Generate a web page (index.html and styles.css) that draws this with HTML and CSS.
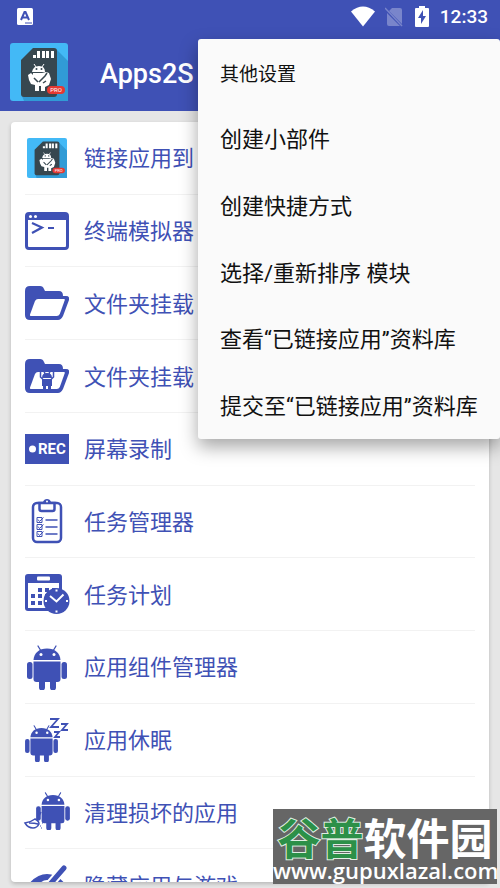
FILE: index.html
```html
<!DOCTYPE html>
<html lang="zh-CN">
<head>
<meta charset="utf-8">
<meta name="viewport" content="width=device-width, initial-scale=1">
<title>Apps2SD</title>
<link rel="stylesheet" href="styles.css">
</head>
<body>
<svg class="sprite" aria-hidden="true">
  <symbol id="sd" viewBox="0 0 58 58">
    <rect width="58" height="58" rx="3" fill="#43b9f6"/>
    <path d="M46 6l12 12v40H14l-2-5z" fill="#319bd6"/>
    <path d="M23 5h21q3 0 3 3v43q0 3-3 3H14q-3 0-3-3V17z" fill="#37474f"/>
    <path d="M23 12h3v3h-3zM27 8h3v7h-3zM32 8h3v7h-3zM36 8h3v7h-3zM41 8h3v7h-3z" fill="#fff"/>
    <path d="M24 21l2 3M34 21l-2 3" stroke="#fff" stroke-width="1"/>
    <path d="M22 29q1-6 7-6t6 6z" fill="#fff"/>
    <path d="M23 30h9l4-1 3 1 2 6-2 6-4 2v4h-4v-5h-2v5h-4v-6l-4-1-2-4-1-5 3-2 2 2z" fill="#fff"/>
    <path d="M29 39l6-6 2-3M24 35l4 4M33 40l3-2" fill="none" stroke="#37474f" stroke-width="1.500"/>
    <circle cx="26.500" cy="26" r="1" fill="#37474f"/><circle cx="31.500" cy="26" r="1" fill="#37474f"/>
    <rect x="37" y="43" width="18" height="8" rx="4" fill="#e53932"/>
    <text class="pro" x="46" y="49">PRO</text>
  </symbol>
  <symbol id="android" viewBox="0 0 40 45">
    <path d="M11 1l3 5M29 1l-3 5" stroke="currentColor" stroke-width="1.300" stroke-linecap="round"/>
    <path d="M6.500 15C7 8 12 3.500 20 3.500S33 8 33.500 15z" fill="currentColor"/>
    <circle cx="14" cy="9.500" r="1.500" fill="#fff"/><circle cx="27" cy="9.500" r="1.500" fill="#fff"/>
    <path d="M6.500 16.500h27V34q0 3-3 3h-21q-3 0-3-3z" fill="currentColor"/>
    <rect x="0" y="17" width="5.500" height="17" rx="2.500" fill="currentColor"/>
    <rect x="34.500" y="17" width="5.500" height="17" rx="2.500" fill="currentColor"/>
    <path d="M12 36h6v6.500a2.500 2.500 0 0 1-6 0zM23 36h6v6.500a2.500 2.500 0 0 1-6 0z" fill="currentColor"/>
  </symbol>
  <symbol id="folder" viewBox="0 0 44 44">
    <path d="M5 5h10q3 0 4 3l1 2h14q4 0 4 5h3q4 0 3 4l-6 16q-2 4-5 4H5q-5 0-5-5V10q0-5 5-5z" fill="currentColor"/>
    <path d="M13 18h26q1 0 .8 1l-5 14q-1 2-3 2H6q-1.500 0-1-1.500l5-13.500q1-2 3-2z" fill="#fff"/>
  </symbol>
</svg>

<header class="appbar">
  <div class="status">
    <svg class="status-app" viewBox="0 0 16 17" aria-hidden="true"><rect width="16" height="17" rx="1.500" fill="#fff"/><path d="M4 12L7.500 4h1L12 12M5.500 9.500h5" fill="none" stroke="#3f51b5" stroke-width="2"/><path d="M8 15h7" stroke="#3f51b5" stroke-width="1"/></svg>
    <svg class="wifi" viewBox="0 0 26 21" aria-hidden="true"><path d="M13 20.500L1 5.500Q13-4.500 25 5.500z" fill="#fff"/></svg>
    <svg class="sim" viewBox="0 0 18 20" aria-hidden="true"><path d="M7 1h8q2 0 2 2v14L4 4zM2 6l13 13H4q-2 0-2-2z" fill="#7985cb"/><path d="M0 1l17 18" stroke="#7985cb" stroke-width="1.500"/></svg>
    <svg class="battery" viewBox="0 0 14 21" aria-hidden="true"><path d="M4 0h6v2h3q1 0 1 1v17q0 1-1 1H1q-1 0-1-1V3q0-1 1-1h3z" fill="#fff"/><path d="M8 4L3 12h3v6l5-8H8z" fill="#3f51b5"/></svg>
    <time>12:33</time>
  </div>
  <div class="brand">
    <svg class="logo" role="img" aria-label="Apps2SD"><use href="#sd"/></svg>
    <h1>Apps2S</h1>
  </div>
</header>

<main class="card">
  <ul class="modules">
    <li><a href="#link"><svg class="icon" viewBox="0 0 44 44"><use href="#sd" x="2" y="2" width="40" height="40"/></svg><span>链接应用到</span></a></li>
    <li><a href="#terminal"><svg class="icon" viewBox="0 0 44 44"><rect x="1.500" y="4.500" width="41" height="35" rx="2.500" fill="#fff" stroke="currentColor" stroke-width="3"/><path d="M1 4h42v7H1z" fill="currentColor"/><circle cx="5.500" cy="7.500" r="1.500" fill="#fff"/><circle cx="10.500" cy="7.500" r="1.500" fill="#fff"/><path d="M7 14l10 4.500L7 24M23 19h6" fill="none" stroke="currentColor" stroke-width="2.200"/></svg><span>终端模拟器</span></a></li>
    <li><a href="#folder-mount"><svg class="icon"><use href="#folder"/></svg><span>文件夹挂载</span></a></li>
    <li><a href="#app-folder-mount"><svg class="icon" viewBox="0 0 44 44"><use href="#folder"/><path d="M17 24q0-5 5-5t5 5zM17 25h10v7H17zM18 31h3v6h-3zM23 31h3v6h-3z" fill="currentColor"/><path d="M15.500 18v5l3 3M28.500 18v5l-3 3M19 17l1 3M25 17l-1 3" fill="none" stroke="currentColor" stroke-width="1.500"/></svg><span>文件夹挂载</span></a></li>
    <li><a href="#record"><svg class="icon" viewBox="0 0 44 44"><path d="M0 7h44v30H0z" fill="currentColor"/><circle cx="7.500" cy="22" r="3.500" fill="#fff"/><text class="rec" x="13" y="27">REC</text></svg><span>屏幕录制</span></a></li>
    <li><a href="#tasks"><svg class="icon" viewBox="0 0 44 44" fill="none" stroke="currentColor"><rect x="8" y="4" width="28" height="39" rx="4" stroke-width="2.500"/><path d="M14.500 4v6q0 2 2 2h11q2 0 2-2V4z" fill="#fff" stroke-width="2.500"/><path d="M18 3q1-3 4-3t4 3v1h-8z" fill="currentColor" stroke="none"/><circle cx="22" cy="2.500" r="1" fill="#fff" stroke="none"/><path d="M20.500 21h12M20.500 28h12M20.500 35h12" stroke-width="1.500"/><path d="M12 18.500h5v5h-5zM12 25.500h5v5h-5zM12 32.500h5v5h-5zM13 20.500l1.500 2 4-4M13 27.500l1.500 2 4-4M13 34.500l1.500 2 4-4"/></svg><span>任务管理器</span></a></li>
    <li><a href="#schedule"><svg class="icon" viewBox="0 0 44 44"><rect x="0" y="2" width="37" height="37" rx="3" fill="currentColor"/><path d="M3 11h31v25H3z" fill="#fff"/><rect x="12" y="4.500" width="13" height="4" rx="1" fill="#fff"/><path d="M13 16h4v4h-4zM20 16h4v4h-4zM27 16h4v4h-4zM6 22h4v4H6zM13 22h4v4h-4zM20 22h4v4h-4zM6 29h4v4H6zM13 29h4v4h-4z" fill="currentColor"/><circle cx="31.500" cy="29" r="13" fill="currentColor"/><path d="M25 24l6.500 5.500 7-7" fill="none" stroke="#fff" stroke-width="2"/><path d="M31.500 17.500v2M31.500 38.500v2M20 29h2M41 29h2" stroke="#fff" stroke-width="2"/></svg><span>任务计划</span></a></li>
    <li><a href="#components"><svg class="icon" viewBox="0 0 44 44"><use href="#android" x="2" y="0" width="40" height="45"/></svg><span>应用组件管理器</span></a></li>
    <li><a href="#hibernate"><svg class="icon" viewBox="0 0 44 44"><use href="#android" x="0" y="7" width="33" height="37"/><path d="M25 1h8l-7 8h8M36 6h6l-5 6h6M29 14h5l-4 5h5" fill="none" stroke="currentColor" stroke-width="1.800"/></svg><span>应用休眠</span></a></li>
    <li><a href="#clean"><svg class="icon" viewBox="0 0 44 44"><use href="#android" x="11" y="2" width="34" height="38"/><path d="M16 22l-4 8" stroke="currentColor" stroke-width="1.500"/><path d="M0 33q6-1 10-4 4 2 4 5-2 4-6 4-5 0-8-5zM4 33q6 0 9 1" fill="#fff" stroke="currentColor" stroke-width="1.500"/><path d="M15 36h1M17 33h1M16 38h1" stroke="currentColor"/></svg><span>清理损坏的应用</span></a></li>
    <li><a href="#hide"><svg class="icon" viewBox="0 0 44 44"><path d="M0 26Q10 11 22 11t22 15Q34 41 22 41T0 26z" fill="currentColor"/><circle cx="22" cy="26" r="9" fill="#fff"/><circle cx="22" cy="26" r="6" fill="currentColor"/><path d="M7 42L39 5" stroke="#fff" stroke-width="9"/><path d="M7 42L39 5" stroke="currentColor" stroke-width="5" stroke-linecap="round"/></svg><span>隐藏应用与游戏</span></a></li>
  </ul>
</main>

<nav class="menu" aria-label="其他设置">
  <button type="button" class="menu-title">其他设置</button>
  <button type="button">创建小部件</button>
  <button type="button">创建快捷方式</button>
  <button type="button">选择/重新排序 模块</button>
  <button type="button">查看“已链接应用”资料库</button>
  <button type="button">提交至“已链接应用”资料库</button>
</nav>

<aside class="watermark">
  <div class="site-name"><span>谷普</span>软件园</div>
  <div class="site-url">www.gupuxlazal.com</div>
</aside>
</body>
</html>
```
FILE: styles.css
```css
* { box-sizing: border-box; }

body {
  margin: 0;
  height: 100vh;
  display: flex;
  flex-direction: column;
  overflow: hidden;
  position: relative;
  background: #e6e6e6;
  font-family: Roboto, "Noto Sans CJK SC", sans-serif;
}

.sprite { display: none; }

.appbar {
  flex: none;
  background: #3f51b5;
  color: #fff;
  padding-bottom: 10px;
}

.status {
  height: 33px;
  display: flex;
  align-items: center;
  padding: 0 12px 0 17px;
  font-size: 19px;
  font-weight: 500;
}
.status-app { width: 16px; height: 17px; margin-right: auto; }
.wifi { width: 26px; height: 21px; margin-right: 9px; }
.sim { width: 18px; height: 20px; margin-right: 12px; }
.battery { width: 14px; height: 21px; margin-right: 11px; }

.brand {
  display: flex;
  align-items: center;
  gap: 32px;
  padding: 10px 10px 0;
}
.logo { width: 58px; height: 58px; }
.pro { font-size: 6px; fill: #fff; text-anchor: middle; }
.brand h1 {
  margin: 0;
  padding-top: 3px;
  font-size: 27px;
  line-height: 32px;
  font-weight: 500;
}

.card {
  flex: 1;
  min-height: 0;
  margin: 11px 11px 6px;
  background: #fff;
  border-radius: 4px;
  box-shadow: 0 2px 4px rgba(0, 0, 0, 0.2);
  overflow: hidden;
}

.modules {
  list-style: none;
  margin: 0;
  padding: 0 14px;
  display: grid;
  grid-template-rows: repeat(11, 1fr);
  height: 800px;
}
.modules li { border-bottom: 1px solid #f2f2f2; }
.modules a {
  height: 100%;
  display: flex;
  align-items: center;
  gap: 15px;
  color: #3f51b5;
  font-size: 22px;
  text-decoration: none;
  white-space: nowrap;
}
.modules span { padding-bottom: 3px; }
.icon { width: 44px; height: 44px; flex: none; overflow: visible; }
.rec { font: bold 15px Roboto, sans-serif; fill: #fff; }

.menu {
  position: absolute;
  top: 39px;
  right: 0;
  width: 302px;
  height: 400px;
  display: grid;
  grid-template-rows: repeat(6, 1fr);
  background: #fafafa;
  border-radius: 3px;
  box-shadow: 0 8px 18px rgba(0, 0, 0, 0.35);
}
.menu button {
  border: 0;
  padding: 0 22px 3px;
  background: none;
  color: #111;
  font: inherit;
  font-size: 22px;
  text-align: left;
  white-space: nowrap;
}
.menu .menu-title { padding-bottom: 0; font-size: 19px; }

.watermark {
  position: absolute;
  right: 3px;
  bottom: 4px;
  width: 224px;
  height: 75px;
  padding-top: 5px;
  background: #666;
  color: #fff;
  text-align: center;
  white-space: nowrap;
}
.site-name {
  font: oblique 8deg 700 43px/44px "Noto Sans CJK SC", sans-serif;
}
.site-name span {
  color: #2c9048;
  -webkit-text-stroke: 2px #dfeee2;
  paint-order: stroke fill;
}
.site-url {
  font: 600 22px/24px "Open Sans", "Noto Sans", sans-serif;
}
```
